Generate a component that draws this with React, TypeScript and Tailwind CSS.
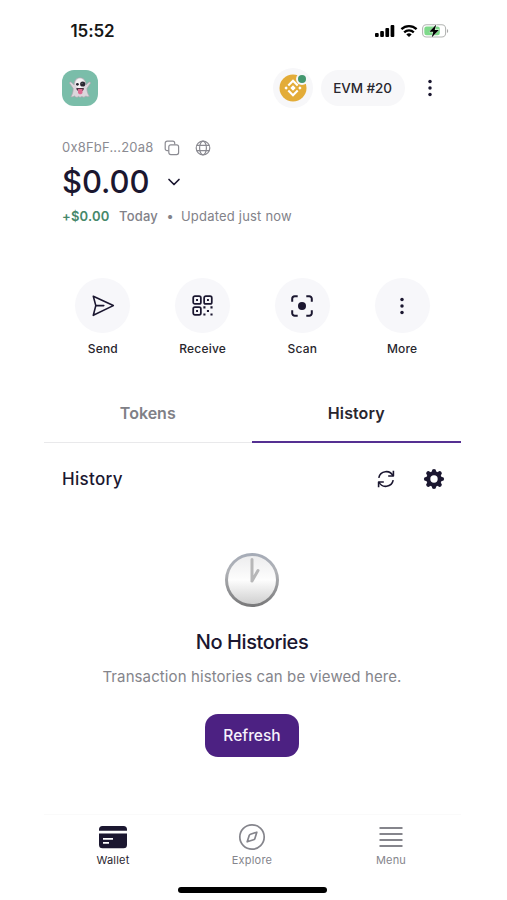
import { useState, type ReactNode } from 'react';

interface Action {
  label: string;
  icon: ReactNode;
}

function DotsIcon({ className }: { className?: string }) {
  return (
    <svg viewBox="0 0 24 24" className={className} fill="currentColor">
      <circle cx="12" cy="4.8" r="1.9" />
      <circle cx="12" cy="12" r="1.9" />
      <circle cx="12" cy="19.2" r="1.9" />
    </svg>
  );
}

function GhostIcon() {
  return (
    <svg viewBox="0 0 24 24" className="size-6">
      <path
        d="M12 1.8c-3.7 0-5.8 2.8-5.9 7L3.2 6.2c-.9-.7-2 .1-1.5 1.2l3.5 5.2c-.1 3.4-.9 6-2.4 8 1.6.8 2.8 0 3.8-.6 1.2 1.6 2.7 1.6 3.8.4 1.1 1 2.4 1 3.5 0 1.4 1.3 2.9 1 3.9-.5 1 .9 2.2 1 3.6.3-1.7-2.2-2.4-4.7-2.5-7.600l3.500-5.200c.5-1.100-.7-1.900-1.500-1.200L18 8.800c-.2-4.200-2.400-7-6-7z"
        fill="#dcd6dc"
        stroke="#aaa4ad"
        strokeWidth=".7"
      />
      <ellipse cx="12" cy="7.500" rx="4.500" ry="5" fill="#f5f2f4" />
      <circle cx="9.400" cy="8.300" r="1.400" fill="#292631" />
      <circle cx="14.700" cy="8" r="2.600" fill="#292631" />
      <circle cx="14.100" cy="7.300" r=".6" fill="#777" />
      <path d="M8.300 12h7.600c0 2.200-1.300 3-2 3.100h-3.200c-1.500-.2-2.400-1.400-2.400-3.100z" fill="#4c303f" />
      <path d="M10 13h4.500v3.200c0 2.800-4.500 2.800-4.500 0z" fill="#dc6a91" />
    </svg>
  );
}

function BnbIcon() {
  return (
    <svg viewBox="0 0 28 28" className="size-7">
      <circle cx="14" cy="14" r="13.500" fill="#e3ac38" />
      <g fill="none" stroke="#fff" strokeWidth="2.100">
        <path d="M9.300 11.500 14 6.800l4.700 4.700M9.300 16.500 14 21.200l4.700-4.700" />
      </g>
      <g fill="#fff">
        <path d="m14 11.300 2.700 2.700-2.700 2.700-2.700-2.700zM7.100 12.300 8.800 14l-1.700 1.700L5.400 14zM20.900 12.300l1.700 1.700-1.700 1.700-1.700-1.700z" />
      </g>
    </svg>
  );
}

function SendIcon() {
  return (
    <svg viewBox="0 0 24 24" className="size-6" fill="none" stroke="currentColor" strokeWidth="1.600" strokeLinejoin="round" strokeLinecap="round">
      <path d="M2.300 2.300 22.300 11.600 2.300 21.300 4.800 11.600z" />
      <path d="M4.800 11.600h8" />
    </svg>
  );
}

function QrIcon() {
  return (
    <svg viewBox="0 0 24 24" className="size-[23px]">
      <g fill="none" stroke="currentColor" strokeWidth="1.800">
        <rect x="2.300" y="2.300" width="8" height="8" rx="1.800" />
        <rect x="13.700" y="2.300" width="8" height="8" rx="1.800" />
        <rect x="2.300" y="13.700" width="8" height="8" rx="1.800" />
      </g>
      <g fill="currentColor">
        <path d="M5.300 5.300h2v2h-2zM16.700 5.300h2v2h-2zM5.300 16.700h2v2h-2z" />
        <path d="M12.900 12.900h2.200v2.200h-2.200zM20.300 12.900h2.200v2.200h-2.200zM16.600 16.600h2.200v2.200h-2.200zM12.900 20.300h2.200v2.200h-2.200zM20.300 20.300h2.200v2.200h-2.200z" />
      </g>
    </svg>
  );
}

function ScanIcon() {
  return (
    <svg viewBox="0 0 24 24" className="size-6">
      <path
        d="M2.200 7.700V4.700a2.500 2.500 0 0 1 2.500-2.500h3M16.300 2.200h3a2.500 2.500 0 0 1 2.500 2.500v3M21.800 16.300v3a2.500 2.500 0 0 1-2.500 2.500h-3M7.700 21.800h-3a2.500 2.500 0 0 1-2.500-2.500v-3"
        fill="none"
        stroke="currentColor"
        strokeWidth="2"
      />
      <circle cx="12" cy="12" r="4" fill="currentColor" />
    </svg>
  );
}

function StatusIcons() {
  return (
    <div className="flex items-center text-black">
      <svg viewBox="0 0 20 14" className="h-3.5 w-5" fill="currentColor">
        <rect x="0" y="9" width="3.700" height="4" rx="1" />
        <rect x="5.200" y="7" width="3.700" height="6" rx="1" />
        <rect x="10.400" y="4" width="3.700" height="9" rx="1" />
        <rect x="15.600" y="1" width="3.700" height="12" rx="1" />
      </svg>
      <svg viewBox="0 0 18 14" className="ml-[5px] h-3.5 w-[18px]" fill="none" stroke="currentColor" strokeWidth="2.300">
        <path d="M1.400 5.200a11 11 0 0 1 15.200 0M4.200 8.300a7 7 0 0 1 9.600 0" />
        <path d="M9 13 6.300 10.400a4 4 0 0 1 5.400 0z" fill="currentColor" stroke="none" />
      </svg>
      <svg viewBox="0 0 27 14" className="ml-1 h-3.5 w-[27px]">
        <rect x=".6" y=".8" width="23" height="12.200" rx="3.800" fill="#fff" stroke="#b3b5b3" strokeWidth="1.100" />
        <rect x="2.300" y="2.500" width="15.500" height="8.800" rx="2.200" fill="#7ed98a" />
        <path d="M25 5v4c1.600-.7 1.600-3.300 0-4z" fill="#a9aaa9" />
        <path d="m14.300.5-7 7.300h4L9.600 13.500l7.300-7.600h-4.200z" fill="#000" stroke="#fff" strokeWidth=".8" paintOrder="stroke" />
      </svg>
    </div>
  );
}

function ClockIcon() {
  return (
    <svg viewBox="0 0 56 56" className="size-14">
      <defs>
        <linearGradient id="rim" x1="0" y1="0" x2="0" y2="1">
          <stop offset="0" stopColor="#a5abb7" />
          <stop offset=".35" stopColor="#b0b2b6" />
          <stop offset="1" stopColor="#777778" />
        </linearGradient>
        <linearGradient id="face" x1="0" y1="0" x2="0" y2="1">
          <stop offset="0" stopColor="#ededee" />
          <stop offset=".5" stopColor="#fdfdfd" />
          <stop offset="1" stopColor="#d0d0d0" />
        </linearGradient>
      </defs>
      <circle cx="28" cy="28" r="27" fill="url(#rim)" />
      <circle cx="28" cy="28" r="24" fill="url(#face)" />
      <path d="M28 7.500V29M28 29l6-10.500" fill="none" stroke="#b7b7b8" strokeWidth="3" strokeLinecap="round" />
    </svg>
  );
}

const actions: Action[] = [
  { label: 'Send', icon: <SendIcon /> },
  { label: 'Receive', icon: <QrIcon /> },
  { label: 'Scan', icon: <ScanIcon /> },
  { label: 'More', icon: <DotsIcon className="size-[22px]" /> },
];

export default function App() {
  const [tab, setTab] = useState('History');

  return (
    <div className="h-[900px] w-[507px] overflow-hidden bg-white font-['Inter',sans-serif] text-[#1b1730]">
      <div className="ml-[43.5px] flex h-full w-[417px] flex-col">
        {/* Status bar */}
        <div className="flex h-[62px] shrink-0 items-center justify-between pr-3 pl-[27px]">
          <span className="pt-[2px] text-[17px] font-semibold tracking-[-0.1px] text-[#161616]">15:52</span>
          <StatusIcons />
        </div>

        {/* Account header */}
        <header className="flex h-[52px] shrink-0 items-center pr-[19px] pl-[18.5px]">
          <div className="flex size-9 items-center justify-center rounded-xl bg-[#7abda9]">
            <GhostIcon />
          </div>
          <button className="relative ml-auto flex size-10 items-center justify-center rounded-full bg-[#f7f7f9]">
            <BnbIcon />
            <span className="absolute top-[7px] right-[7px] size-[8px] rounded-full bg-[#43976f] ring-2 ring-[#f7f7f9]" />
          </button>
          <button className="ml-2 h-9 w-[84px] rounded-full bg-[#f7f7f9] pt-px text-[13.5px] font-medium tracking-[-0.1px] text-[#29272e]">
            EVM #20
          </button>
          <button className="ml-[13px] flex w-6 justify-center">
            <DotsIcon className="h-[22px] w-[22px]" />
          </button>
        </header>

        {/* Balance */}
        <section className="mt-6 flex h-[90px] shrink-0 flex-col pl-[18.5px]">
          <div className="flex h-5 items-center text-[#8b8b92]">
            <span className="w-[102px] text-[13px] tracking-[0.2px]">0x8FbF...20a8</span>
            <svg viewBox="0 0 16 16" className="size-4" fill="none" stroke="currentColor" strokeWidth="1.200">
              <path d="M4.600 10.700H3.200a2 2 0 0 1-2-2V3.200a2 2 0 0 1 2-2h5.500a2 2 0 0 1 2 2v1.400" />
              <rect x="4.800" y="4.800" width="9.800" height="9.800" rx="2" />
            </svg>
            <svg viewBox="0 0 16 16" className="ml-[15px] size-4" fill="none" stroke="currentColor" strokeWidth="1.200">
              <circle cx="8" cy="8" r="6.800" />
              <ellipse cx="8" cy="8" rx="3.400" ry="6.800" />
              <path d="M1.900 5.400h12.200M1.900 10.600h12.200" />
            </svg>
          </div>
          <div className="flex h-12 items-center">
            <span className="text-[31px] font-medium tracking-[-0.1px]">$0.00</span>
            <svg viewBox="0 0 14 14" className="ml-[18px] size-3.5" fill="none" stroke="currentColor" strokeWidth="1.700" strokeLinecap="round" strokeLinejoin="round">
              <path d="m2 4.500 5 5 5-5" />
            </svg>
          </div>
          <div className="flex h-5 items-center pt-px text-[13px] tracking-[0.2px] text-[#828289]">
            <span className="w-[57px] font-semibold text-[#46886a]">+$0.00</span>
            <span className="w-12 font-medium">Today</span>
            <span className="w-[14px] font-bold">•</span>
            <span>Updated just now</span>
          </div>
        </section>

        {/* Actions */}
        <div className="mt-[50px] ml-[9.5px] grid h-[82px] w-[399px] shrink-0 grid-cols-4">
          {actions.map((action) => (
            <button key={action.label} className="flex flex-col items-center">
              <span className="flex size-[55px] items-center justify-center rounded-full bg-[#f7f7fa]">
                {action.icon}
              </span>
              <span className="mt-[7px] text-[12px] leading-[18px] font-medium tracking-[0.2px] text-[#28262d]">
                {action.label}
              </span>
            </button>
          ))}
        </div>

        {/* Tabs */}
        <div className="mt-6 grid h-[58.5px] shrink-0 grid-cols-2">
          {['Tokens', 'History'].map((name) => (
            <button
              key={name}
              onClick={() => setTab(name)}
              className={
                tab === name
                  ? 'border-b-[2.5px] border-[#553092] pt-px text-[16px] font-semibold tracking-[0.1px] text-[#29262f]'
                  : 'border-b border-[#e9e9eb] text-[16px] font-semibold text-[#808086]'
              }
            >
              {name}
            </button>
          ))}
        </div>

        {/* History toolbar */}
        <div className="mt-[24.5px] flex h-6 shrink-0 items-center pr-4 pl-[18.5px]">
          <h2 className="mr-auto pt-[2px] text-[17px] font-medium tracking-[0.3px]">{tab}</h2>
          <svg viewBox="0 0 20 20" className="size-5" fill="none" stroke="currentColor" strokeWidth="1.600" strokeLinejoin="round">
            <path d="M2.800 8.800A7.600 7.600 0 0 1 17.100 7M17.200 11.200A7.600 7.600 0 0 1 2.900 13" />
            <path d="M17.400 1.800V7h-5.200M2.600 18.200V13h5.200" />
          </svg>
          <svg viewBox="0 0 22 22" className="ml-[27px] size-[22px]">
            <g stroke="currentColor" strokeWidth="4.200" strokeLinecap="round">
              <path d="M11 3v16M3 11h16M5.300 5.300l11.400 11.400M16.700 5.300 5.300 16.700" />
            </g>
            <circle cx="11" cy="11" r="7.800" fill="currentColor" />
            <circle cx="11" cy="11" r="3.700" fill="#fff" />
          </svg>
        </div>

        {/* Empty state */}
        <main className="flex flex-1 flex-col items-center pt-[61px]">
          <ClockIcon />
          <h3 className="mt-5 text-[20px] leading-7 font-medium tracking-[-0.4px]">No Histories</h3>
          <p className="mt-[9px] text-[15px] leading-6 tracking-[0.1px] text-[#85858b]">
            Transaction histories can be viewed here.
          </p>
          <button className="mt-[25px] h-[43px] w-[94px] rounded-[13px] bg-[#4c2182] text-[15.5px] font-medium text-[#f7f2fc]">
            Refresh
          </button>
        </main>

        {/* Bottom navigation */}
        <nav className="grid h-[62px] shrink-0 grid-cols-3 border-t border-[#fafafa] pt-[7px] text-[11px] leading-4 tracking-[0.2px] text-[#85858c]">
          <a className="flex flex-col items-center text-[#29262f]">
            <svg viewBox="0 0 30 30" className="size-[30px] text-[#1b1730]">
              <path d="M1 8.700V7.500A3.500 3.500 0 0 1 4.500 4h21A3.500 3.500 0 0 1 29 7.500v1.200zM1 11.500h28v11.300a3.500 3.500 0 0 1-3.500 3.500h-21A3.500 3.500 0 0 1 1 22.800z" fill="currentColor" />
              <path d="M5 16.900h10M5 20.900h6" stroke="#fff" strokeWidth="1.700" />
            </svg>
            <span>Wallet</span>
          </a>
          <a className="flex flex-col items-center">
            <svg viewBox="0 0 30 30" className="size-[30px]" fill="none" stroke="currentColor" strokeWidth="1.700" strokeLinejoin="round">
              <circle cx="15" cy="15" r="12.200" />
              <path d="m19.800 10.200-1.900 6.300a2 2 0 0 1-1.300 1.300l-6.400 2 2-6.300a2 2 0 0 1 1.300-1.300z" />
            </svg>
            <span>Explore</span>
          </a>
          <a className="flex flex-col items-center">
            <svg viewBox="0 0 30 30" className="size-[30px]" stroke="currentColor" strokeWidth="1.800">
              <path d="M3.500 6h23M3.500 12h23M3.500 18h23M3.500 24h23" />
            </svg>
            <span>Menu</span>
          </a>
        </nav>

        {/* Home indicator */}
        <div className="flex h-6 shrink-0 justify-center pt-[11px]">
          <div className="h-[6px] w-[149px] rounded-full bg-black" />
        </div>
      </div>
    </div>
  );
}
